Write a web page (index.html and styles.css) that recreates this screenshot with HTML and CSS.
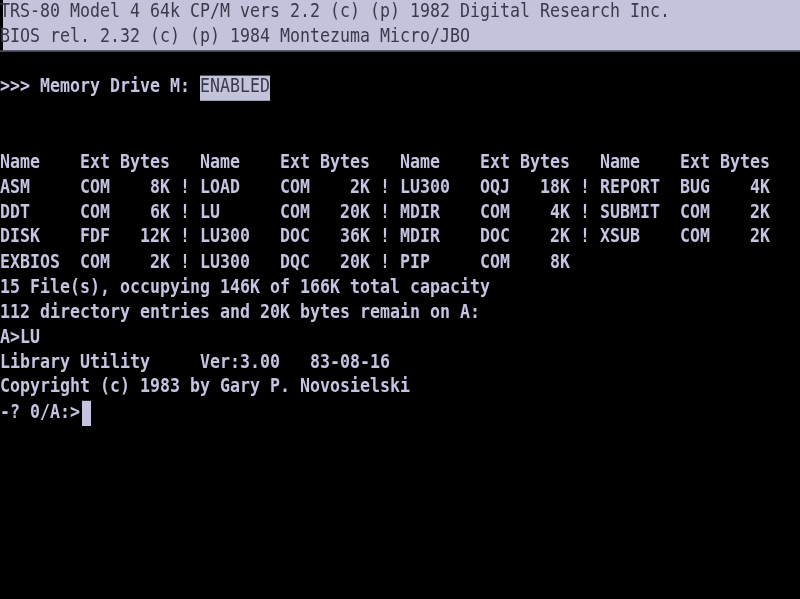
FILE: index.html
```html
<!DOCTYPE html>
<html>
<head>
<meta charset="utf-8">
<link rel="stylesheet" href="styles.css">
</head>
<body>
<div class="crt">
<div class="screen">
<div class="banner">
<div class="line">TRS-80 Model 4 64k CP/M vers 2.2 (c) (p) 1982 Digital Research Inc.</div>
<div class="line">BIOS rel. 2.32 (c) (p) 1984 Montezuma Micro/JBO</div>
</div>
<div class="line"> </div>
<div class="line">&gt;&gt;&gt; Memory Drive M: <span class="inv">ENABLED</span></div>
<div class="line"> </div>
<div class="line"> </div>
<div class="line">Name    Ext Bytes   Name    Ext Bytes   Name    Ext Bytes   Name    Ext Bytes</div>
<div class="line">ASM     COM    8K ! LOAD    COM    2K ! LU300   OQJ   18K ! REPORT  BUG    4K</div>
<div class="line">DDT     COM    6K ! LU      COM   20K ! MDIR    COM    4K ! SUBMIT  COM    2K</div>
<div class="line">DISK    FDF   12K ! LU300   DOC   36K ! MDIR    DOC    2K ! XSUB    COM    2K</div>
<div class="line">EXBIOS  COM    2K ! LU300   DQC   20K ! PIP     COM    8K</div>
<div class="line">15 File(s), occupying 146K of 166K total capacity</div>
<div class="line">112 directory entries and 20K bytes remain on A:</div>
<div class="line">A&gt;LU</div>
<div class="line">Library Utility     Ver:3.00   83-08-16</div>
<div class="line">Copyright (c) 1983 by Gary P. Novosielski</div>
<div class="line">-? 0/A:&gt;<span class="cursor"> </span></div>
</div>
</div>
</body>
</html>
```
FILE: styles.css
```css
html, body {
  margin: 0;
  padding: 0;
  background: #000;
}
.crt {
  width: 800px;
  height: 599px;
  overflow: hidden;
  background: #000;
}
.screen {
  font-family: "DejaVu Sans Mono", "Liberation Mono", monospace;
  font-size: 16.61px;
  font-weight: bold;
  color: #c4c4e0;
  transform: scaleY(1.2);
  transform-origin: top left;
  filter: blur(0.4px);
}
.line {
  white-space: pre;
  height: 20.833px;
  line-height: 17.5px;
}
.banner {
  background: linear-gradient(to right, #000 3px, #c3c3dc 3px);
  color: #3a3a4a;
  border-bottom: 1px solid #6a6a80;
  height: 41.67px;
}
.banner .line {
  font-weight: normal;
}
.inv {
  display: inline-block;
  height: 20.833px;
  vertical-align: top;
  background: #c3c3dc;
  color: #3a3a4a;
  font-weight: normal;
}
.cursor {
  display: inline-block;
  width: 9px;
  height: 20.833px;
  background: #c4c4e0;
  vertical-align: top;
  margin-left: 2px;
}
```
